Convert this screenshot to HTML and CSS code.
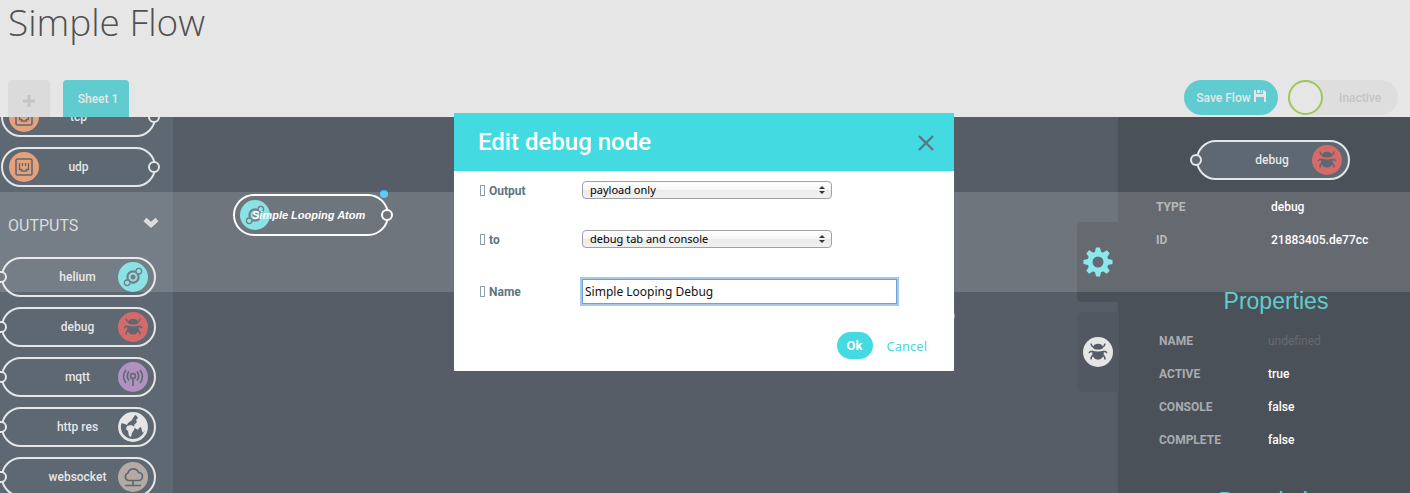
FILE: index.html
```html
<!DOCTYPE html>
<html lang="en">
<head>
<meta charset="utf-8">
<title>Simple Flow</title>
<link rel="stylesheet" href="styles.css">
</head>
<body>
<svg class="defs" aria-hidden="true">
  <symbol id="bug" viewBox="0 0 30 30">
    <path d="M10 10.500a5 3.800 0 0 1 10 0q0 2-5 2t-5-2z" fill="currentColor"/>
    <path d="M9.200 13.700q5.800 1.400 11.600 0 .8 8.300-5.800 9-6.600-.7-5.800-9z" fill="currentColor"/>
    <path d="M8 6.500q.5 3.500 3.500 4M22 6.500q-.5 3.500-3.500 4M6 16l1.500-1.500H10M24 16l-1.500-1.500H20M8 22.500q0-3.500 2.500-4.500M22 22.500q0-3.500-2.500-4.500" fill="none" stroke="currentColor" stroke-width="1.500"/>
  </symbol>
  <symbol id="helium" viewBox="0 0 30 30">
    <circle cx="15" cy="15" r="5.600" fill="none" stroke="currentColor" stroke-width="2.200"/>
    <circle cx="15" cy="15" r="2.500" fill="currentColor"/>
    <circle class="dot" cx="20.800" cy="9.200" r="2.800" stroke="currentColor" stroke-width="1.300"/>
    <circle class="dot" cx="9.200" cy="20.800" r="2.800" stroke="currentColor" stroke-width="1.300"/>
  </symbol>
  <symbol id="socket" viewBox="0 0 30 30">
    <rect x="7" y="7" width="16" height="16" rx="1.500" fill="none" stroke="currentColor" stroke-width="1.600"/>
    <path d="M10.500 11v6.500h2v1.500h5v-1.500h2V11M13.500 11v3M16.500 11v3" fill="none" stroke="currentColor" stroke-width="1.300"/>
  </symbol>
</svg>

<header class="topbar">
  <h1 class="title">Simple Flow</h1>
  <div class="toolbar">
    <nav class="sheets">
      <button class="sheet sheet-add" type="button" aria-label="Add sheet"><svg width="12" height="12" viewBox="0 0 12 12"><path d="M6 0v12M0 6h12" stroke="currentColor" stroke-width="3"/></svg></button>
      <button class="sheet sheet-active" type="button">Sheet 1</button>
    </nav>
    <div class="actions">
      <button class="save" type="button">Save Flow
        <svg width="12" height="12" viewBox="0 0 12 12"><path fill-rule="evenodd" d="M0 0h2v4h7V0h1l2 2v10h-2V7H2v5H0zM3 0h3v3H3zM7 0h1v3H7z" fill="currentColor"/></svg>
      </button>
      <label class="toggle"><input type="checkbox" class="knob"><span>Inactive</span></label>
    </div>
  </div>
</header>

<main class="workspace">
  <aside class="palette">
    <div class="node out"><i class="badge orange"><svg><use href="#socket"/></svg></i><span>tcp</span></div>
    <div class="node out"><i class="badge orange"><svg><use href="#socket"/></svg></i><span>udp</span></div>
    <h2 class="category">OUTPUTS
      <svg width="16" height="12" viewBox="0 0 16 12"><path d="M2 2.500l6 5.500 6-5.500" fill="none" stroke="currentColor" stroke-width="4.500"/></svg>
    </h2>
    <div class="node in"><span>helium</span><i class="badge cyan"><svg><use href="#helium"/></svg></i></div>
    <div class="node in"><span>debug</span><i class="badge red"><svg><use href="#bug"/></svg></i></div>
    <div class="node in"><span>mqtt</span><i class="badge purple"><svg viewBox="0 0 30 30"><g fill="none" stroke="currentColor" stroke-width="1.600"><circle cx="15" cy="14" r="2.500"/><path d="M15 17v7M11 9.500q-3.500 4.500 0 9M19 9.500q3.500 4.500 0 9M8 8q-5 6.500 0 13M22 8q5 6.500 0 13"/></g></svg></i></div>
    <div class="node in"><span>http res</span><i class="badge globe"><svg viewBox="0 0 30 30"><circle cx="15" cy="15" r="13.500" fill="none" stroke="#e6e6e6" stroke-width="2.800"/><path fill="#e6e6e6" d="M3 11l3-6 6-3 5 1-2 3-1 2-4 3-1 2-2-1-4-1zM9 14l4-1 4 2-1 3-2 3-1 4-2-1-1-5-2-2zM18 3l6 2 4 7-1 6-2 3-1-2-1-4-2 1-1 2-3-2-1-3 3-3-1-2 2-2z"/></svg></i></div>
    <div class="node in"><span>websocket</span><i class="badge taupe"><svg viewBox="0 0 30 30"><path d="M10 18.500a4 4 0 0 1 0-7.500 5.500 5.500 0 0 1 10.500-.5 4 4 0 0 1 0 8zM15 18.500v5M7 23.500h16" fill="none" stroke="currentColor" stroke-width="1.700"/></svg></i></div>
  </aside>

  <section class="canvas">
    <div class="node flow-node out"><i class="badge cyan"><svg><use href="#helium"/></svg></i><em>Simple Looping Atom</em></div>
    <div class="far-port"></div>
  </section>

  <aside class="inspector">
    <div class="side-tabs">
      <button class="side-tab current" type="button" aria-label="Settings"><svg width="30" height="30" viewBox="-15 -15 30 30"><circle r="8" fill="none" stroke="#7ae4ea" stroke-width="5"/><g fill="#7ae4ea"><path id="t" d="M-3.300-9l1.300-5.500h4L3.300-9z"/><use href="#t" transform="rotate(45)"/><use href="#t" transform="rotate(90)"/><use href="#t" transform="rotate(135)"/><use href="#t" transform="rotate(180)"/><use href="#t" transform="rotate(225)"/><use href="#t" transform="rotate(270)"/><use href="#t" transform="rotate(315)"/></g></svg></button>
      <button class="side-tab" type="button" aria-label="Debug"><i class="badge light"><svg><use href="#bug"/></svg></i></button>
    </div>
    <div class="node in preview"><span>debug</span><i class="badge red"><svg><use href="#bug"/></svg></i></div>
    <table class="facts summary">
      <tr><th>TYPE</th><td>debug</td></tr>
      <tr><th>ID</th><td>21883405.de77cc</td></tr>
    </table>
    <h2 class="section">Properties</h2>
    <table class="facts">
      <tr><th>NAME</th><td class="unset">undefined</td></tr>
      <tr><th>ACTIVE</th><td>true</td></tr>
      <tr><th>CONSOLE</th><td>false</td></tr>
      <tr><th>COMPLETE</th><td>false</td></tr>
    </table>
    <h2 class="section">Description</h2>
  </aside>
  <div class="band"></div>
</main>

<div class="modal" role="dialog" aria-labelledby="modal-title">
  <div class="modal-head">
    <h2 id="modal-title">Edit debug node</h2>
    <button class="close" type="button" aria-label="Close"><svg width="16" height="16" viewBox="0 0 16 16"><path d="M1 1l14 14M15 1L1 15" stroke="currentColor" stroke-width="2.400"/></svg></button>
  </div>
  <form class="form">
    <div class="field"><label for="output"><i class="tofu"></i>Output</label><div class="pick"><select id="output"><option>payload only</option></select></div></div>
    <div class="field"><label for="to"><i class="tofu"></i>to</label><div class="pick"><select id="to"><option>debug tab and console</option></select></div></div>
    <div class="field"><label for="name"><i class="tofu"></i>Name</label><input id="name" type="text" value="Simple Looping Debug"></div>
    <div class="buttons"><button class="ok" type="button">Ok</button><button class="cancel" type="button">Cancel</button></div>
  </form>
</div>
</body>
</html>
```
FILE: styles.css
```css
*, *::before, *::after { box-sizing: border-box; }
body {
  margin: 0;
  height: 100vh;
  display: flex;
  flex-direction: column;
  overflow: hidden;
  background: #565d66;
  color: #e6e6e6;
  font: 500 12px/16px Roboto, sans-serif;
}
h1, h2 { margin: 0; }
button { border: 0; padding: 0; background: none; font: inherit; color: inherit; }
svg { display: block; }
.defs { position: absolute; width: 0; height: 0; }

.topbar { flex: none; background: #e6e6e6; }
.title {
  padding-left: 8px;
  font: 300 37px/44px "Open Sans", sans-serif;
  color: #505050;
}
.toolbar { display: flex; justify-content: space-between; padding: 36px 12px 0 8px; }
.sheets { display: flex; gap: 13px; }
.sheet { height: 37px; border-radius: 4px 4px 0 0; }
.sheet-add { display: grid; place-items: center; width: 42px; padding-top: 4px; background: #dbdbdb; color: #c4c4c4; }
.sheet-active { width: 66px; padding-left: 4px; background: #61cccf; color: #e6e6e6; }
.actions { display: flex; gap: 10px; height: 35px; }
.save { display: flex; align-items: center; justify-content: center; gap: 3px; width: 94px; border-radius: 18px; background: #61cccf; }
.save svg { margin-bottom: 3px; }
.toggle { display: flex; align-items: center; gap: 16px; width: 110px; border-radius: 18px; background: #dedede; color: #c4c4c4; }
.knob { appearance: none; width: 35px; height: 35px; margin: 0; border: 2px solid #9fc65a; border-radius: 50%; background: #e6e6e6; }

.workspace { position: relative; flex: 1; min-height: 0; display: grid; grid-template-columns: 173px 1fr 292px; }
.band { position: absolute; top: 75px; left: 0; right: 0; height: 100px; background: rgba(255, 255, 255, .15); }

.node {
  position: relative;
  display: flex;
  align-items: center;
  width: 154px;
  height: 40px;
  padding: 0 6px;
  border: 2px solid #e6e6e6;
  border-radius: 20px;
  background: #5d6873;
  color: #e6e6e6;
}
.node span { flex: 1; text-align: center; }
.node.in span { padding-left: 28px; }
.node.out span { padding-right: 30px; }
.node::after {
  content: "";
  position: absolute;
  top: 12px;
  width: 12px;
  height: 12px;
  border: 2px solid #e6e6e6;
  border-radius: 50%;
  background: inherit;
}
.node.out::after { right: -6px; }
.node.in::after { left: -8px; }
.badge { flex: none; width: 30px; height: 30px; border-radius: 50%; color: #5d6873; }
.badge svg { width: 30px; height: 30px; }
.dot { fill: #7ae0e2; }
.orange { background: #e5a27a; }
.cyan { background: #75dde0; }
.red { background: #d46a6a; }
.purple { background: #b091bf; }
.taupe { background: #b5a9a5; }
.light { background: #e6e6e6; color: #565d66; }

.palette { display: flex; flex-direction: column; gap: 10px; overflow: hidden; padding-left: 1px; margin-top: -20px; clip-path: inset(20px 0 0 0); background: #5d6873; }
.palette .node { flex: none; width: 155px; }
.category {
  flex: none;
  display: flex;
  justify-content: space-between;
  align-items: center;
  height: 50px;
  padding: 8px 14px 0 7px;
  font: 400 16px/20px Roboto, sans-serif;
  color: #d6d6d6;
}
.category svg { margin-bottom: 6px; }

.canvas { position: relative; }
.flow-node {
  position: absolute;
  left: 60px;
  top: 77px;
  width: 156px;
  height: 42px;
  padding: 0 5px;
  border-color: #fff;
  border-radius: 21px;
  background: #565d66;
  color: #fff;
}
.flow-node em { margin-left: -18px; white-space: nowrap; font: italic bold 11px/16px "Liberation Sans", Arial, sans-serif; }
.flow-node::before {
  content: "";
  position: absolute;
  right: -1px;
  top: -6px;
  width: 8px;
  height: 8px;
  border-radius: 50%;
  background: #40c4ff;
}
.flow-node::after { border-color: #fff; top: 13px; }
.far-port { position: absolute; left: 770px; top: 193px; width: 12px; height: 12px; border: 2px solid #a9adb2; border-radius: 50%; }

.inspector { position: relative; min-height: 0; padding: 23px 0 0 38px; background: #4b5158; }
.side-tabs { position: absolute; left: -41px; top: 105px; display: grid; gap: 10px; }
.side-tab { display: grid; place-items: center; width: 42px; height: 80px; border-radius: 5px 0 0 5px; background: #525862; }
.side-tab.current { width: 41px; background: #4b5158; }
.preview { margin: 0 0 10px 40px; }
.facts { border-collapse: collapse; margin-left: 3px; }
.facts th, .facts td { height: 33px; padding: 0; text-align: left; }
.facts th { width: 109px; font-weight: 700; color: #a9adb2; }
.facts td { color: #fff; }
.facts .unset { font-weight: 400; color: #666a70; }
.summary { margin-left: 0; }
.summary th { width: 115px; }
.section { margin: 30px 14px 8px 0; text-align: center; font: 400 23px/30px "Liberation Sans", Arial, sans-serif; color: #61cccf; }

.modal { position: fixed; top: 113px; left: 50%; width: 500px; margin-left: -251px; background: #fff; color: #5d7580; }
.modal-head { display: flex; align-items: center; justify-content: space-between; height: 58px; padding: 0 20px 0 24px; background: #43dae1; }
.modal-head h2 { font: 500 24px/32px Roboto, sans-serif; color: #fff; }
.close { padding-top: 2px; color: #5d7580; }
.form { padding: 10px 24px 12px 26px; }
.field { display: grid; grid-template-columns: 102px 1fr; align-items: center; margin-bottom: 30px; font-weight: 700; }
.field:nth-child(3) { margin-bottom: 28px; }
.field label { display: flex; align-items: center; gap: 4px; }
.tofu { width: 5px; height: 11px; border: 1px solid #8da0aa; }
.pick { position: relative; width: 250px; height: 19px; }
.pick::before, .pick::after { content: ""; position: absolute; right: 7px; border: 3px solid transparent; }
.pick::before { top: 2px; border-bottom: 3px solid #333; }
.pick::after { bottom: 3px; border-top: 3px solid #333; }
select {
  appearance: none;
  display: block;
  width: 100%;
  height: 18px;
  padding: 0 7px;
  border: 1px solid #a0a0a0;
  border-radius: 4px;
  background: linear-gradient(#fff, #f6f6f6 50%, #ebebeb 51%, #f0f0f0);
  color: #000;
  font: 11px/16px "Noto Sans", sans-serif;
}
input[type="text"] {
  width: 315px;
  height: 25px;
  padding: 0 2px;
  border: 1px solid #6ea0d8;
  outline: 2px solid #a8c8ea;
  color: #111;
  font: 12px/18px "Noto Sans", sans-serif;
}
.buttons { display: flex; justify-content: flex-end; gap: 14px; padding-right: 3px; }
.ok { width: 36px; height: 27px; border-radius: 14px; background: #43dae1; color: #fff; font-size: 13px; font-weight: 700; }
.cancel { color: #43dae1; font: 13px/18px "Noto Sans", sans-serif; }
```
